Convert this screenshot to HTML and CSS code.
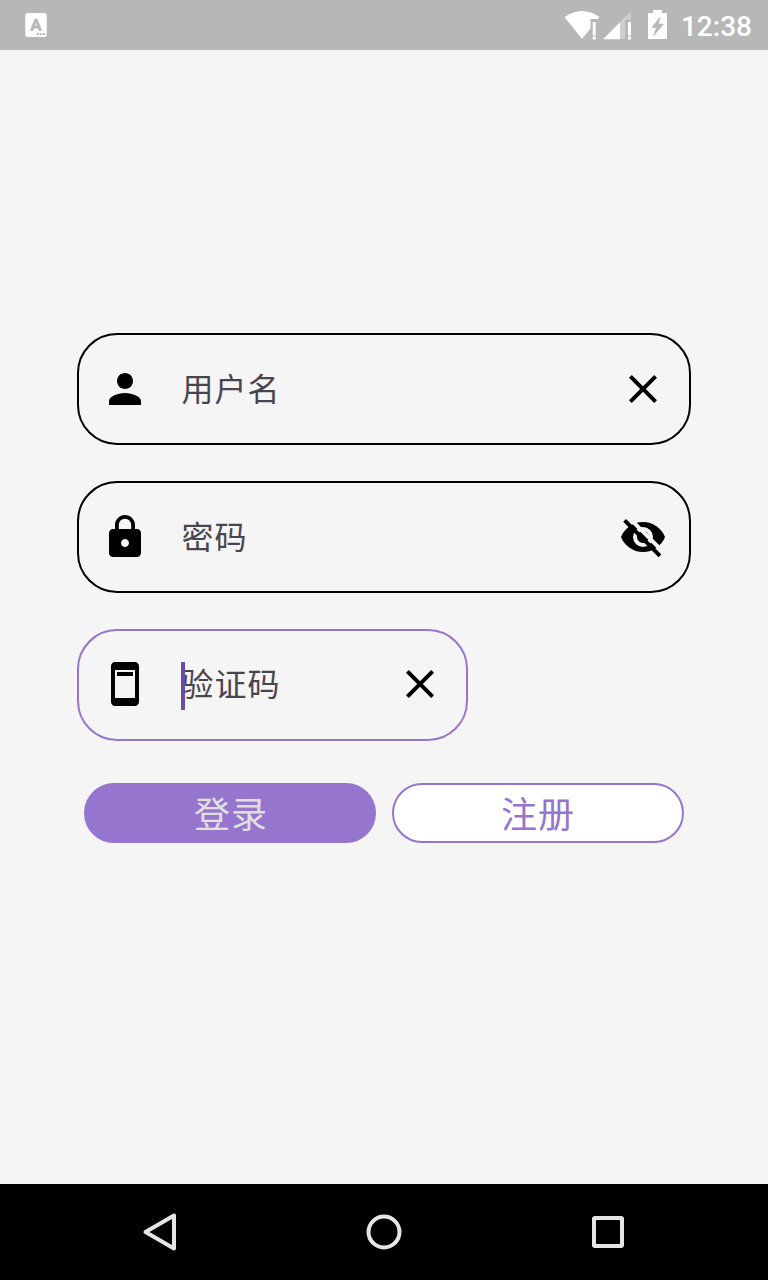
FILE: index.html
```html
<!DOCTYPE html>
<html lang="zh-CN">
<head>
<meta charset="utf-8">
<title>登录</title>
<link rel="stylesheet" href="styles.css">
</head>
<body>
<div class="screen">
  <header class="status-bar">
    <svg class="notice" width="22" height="24" viewBox="0 0 22 24"><rect x=".3" width="21.400" height="24" rx="2.500" fill="#fff"/><path d="M5.200 17.500 9.800 6h2.400l4.600 11.500h-3l-.8-2.300H9l-.8 2.300zM9.700 13h2.600L11 9.200z" fill="#b7b7b7" stroke="#b7b7b7" stroke-width=".5"/><path d="M11.500 20h2v2h-2zm3.200 0h2v2h-2zm3.200 0h2v2h-2z" fill="#b7b7b7"/></svg>
    <div class="indicators">
      <svg class="network" width="68" height="30" viewBox="0 0 68 30"><path d="M-.5 7Q17 -5 34.500 7L33 9h-7.500v9.500L17 29z" fill="#fff"/><path d="M27.700 12h3v13.500h-3zm0 14.500h3v3h-3z" fill="#fff"/><path d="M66 1v9h-6v19h-5V12z" fill="#cfcfcf"/><path d="M38 29.200 55 12.200v17zM63 12h3v13.500h-3zm0 14.500h3v3h-3z" fill="#fff"/></svg>
      <svg class="battery" width="19" height="29" viewBox="0 0 19 29"><path d="M5 0h9v3h4.500l.5.500v25l-.5.500H.5L0 28.500v-25L.5 3H5z" fill="#fff"/><path d="M12 7 4 17.500h4.500L5.500 26 15.500 14h-5z" fill="#b7b7b7" stroke="#b7b7b7" stroke-width=".6"/></svg>
      <span class="clock">12:38</span>
    </div>
  </header>
  <main class="content">
    <div class="field">
      <svg class="icon" viewBox="0 0 24 24"><path d="M12 12c2.210 0 4-1.790 4-4s-1.790-4-4-4-4 1.790-4 4 1.790 4 4 4zm0 2c-2.670 0-8 1.340-8 4v2h16v-2c0-2.660-5.330-4-8-4z"/></svg>
      <span class="label">用户名</span>
      <svg class="icon" viewBox="0 0 24 24"><path d="M19 6.410 17.590 5 12 10.590 6.410 5 5 6.410 10.590 12 5 17.590 6.410 19 12 13.410 17.590 19 19 17.590 13.410 12z"/></svg>
    </div>
    <div class="field">
      <svg class="icon" viewBox="0 0 24 24"><path d="M18 8h-1V6c0-2.760-2.240-5-5-5S7 3.240 7 6v2H6c-1.100 0-2 .9-2 2v10c0 1.100.9 2 2 2h12c1.100 0 2-.9 2-2V10c0-1.100-.9-2-2-2zm-6 9c-1.100 0-2-.9-2-2s.9-2 2-2 2 .9 2 2-.9 2-2 2zm3.100-9H8.900V6c0-1.710 1.390-3.100 3.100-3.100s3.100 1.390 3.100 3.100z"/></svg>
      <span class="label">密码</span>
      <svg class="icon" viewBox="0 0 24 24"><path d="M12 4.500C7 4.500 2.730 7.610 1 12c1.730 4.390 6 7.500 11 7.500s9.270-3.110 11-7.500c-1.730-4.390-6-7.500-11-7.500z"/><circle cx="12" cy="12" r="4" fill="none" stroke="#f5f5f5" stroke-width="2"/><path d="M4.200 1.600 22.580 19.980" fill="none" stroke="#f5f5f5" stroke-width="2"/><path d="M2.800 3.700 20.500 21.400" fill="none" stroke="#000" stroke-width="2"/></svg>
    </div>
    <div class="field field-code">
      <svg class="icon" viewBox="0 0 24 24"><path d="M17 1H7c-1.100 0-2 .9-2 2v18c0 1.100.9 2 2 2h10c1.100 0 2-.9 2-2V3c0-1.100-.9-2-2-2zm0 18H7V5h10zM8 6h8v2H8z" fill-rule="evenodd"/></svg>
      <span class="label"><i class="cursor"></i>验证码</span>
      <svg class="icon" viewBox="0 0 24 24"><path d="M19 6.410 17.590 5 12 10.590 6.410 5 5 6.410 10.590 12 5 17.590 6.410 19 12 13.410 17.590 19 19 17.590 13.410 12z"/></svg>
    </div>
    <div class="actions">
      <button class="button button-login">登录</button>
      <button class="button button-register">注册</button>
    </div>
  </main>
  <nav class="nav-bar">
    <svg class="nav-icon" viewBox="0 0 48 48"><path d="M38 7.500v33L9.500 24z"/></svg>
    <svg class="nav-icon" viewBox="0 0 48 48"><circle cx="24" cy="24" r="15.500"/></svg>
    <svg class="nav-icon" viewBox="0 0 48 48"><rect x="10" y="10" width="28" height="28" rx="1"/></svg>
  </nav>
</div>
</body>
</html>
```
FILE: styles.css
```css
body {
  margin: 0;
  font-family: "Noto Sans CJK SC", sans-serif;
}
.screen {
  display: flex;
  flex-direction: column;
  width: 768px;
  height: 1280px;
  background: #f5f5f5;
}
svg {
  display: block;
  flex: none;
}
.status-bar {
  display: flex;
  justify-content: space-between;
  box-sizing: border-box;
  height: 50px;
  padding: 0 16px 0 25px;
  background: #b7b7b7;
}
.notice {
  margin-top: 13px;
}
.indicators {
  display: flex;
}
.network {
  margin-top: 10px;
  overflow: visible;
}
.battery {
  margin: 10px 14px 0 15px;
}
.clock {
  color: #fff;
  font: 500 28px/50px Roboto, sans-serif;
  padding-top: 2px;
}
.content {
  display: flex;
  flex: 1;
  flex-direction: column;
  gap: 36px;
  padding: 283px 77px 0;
}
.field {
  display: flex;
  align-items: center;
  box-sizing: border-box;
  height: 112px;
  padding: 0 22px;
  border: 2px solid #000;
  border-radius: 40px;
}
.field-code {
  width: 391px;
  margin-top: -0.5px;
  padding-bottom: 1px;
  border-color: #9575cd;
}
.icon {
  width: 48px;
  height: 48px;
}
.label {
  position: relative;
  flex: 1;
  box-sizing: border-box;
  height: 48px;
  padding-left: 32.5px;
  color: #49454f;
  font-size: 32px;
  line-height: 45px;
  letter-spacing: 1px;
}
.cursor {
  position: absolute;
  top: 2px;
  left: 32px;
  width: 4px;
  height: 48px;
  background: #6750a4;
}
.actions {
  display: flex;
  gap: 16px;
  padding: 6.5px 7px 0;
}
.button {
  flex: none;
  box-sizing: border-box;
  width: 292px;
  height: 60px;
  padding: 0 0 2px;
  border: 2px solid #9575cd;
  border-radius: 30px;
  font-family: inherit;
  font-size: 36px;
  line-height: 54px;
  letter-spacing: 1px;
}
.button-login {
  padding-left: 2px;
  background: #9575cd;
  color: #e0e0e0;
}
.button-register {
  background: #fff;
  color: #9575cd;
}
.nav-bar {
  display: flex;
  justify-content: center;
  align-items: center;
  gap: 176px;
  height: 96px;
  background: #000;
}
.nav-icon {
  width: 48px;
  height: 48px;
  fill: none;
  stroke: #e6e6e6;
  stroke-width: 4;
  stroke-linejoin: round;
}
```
